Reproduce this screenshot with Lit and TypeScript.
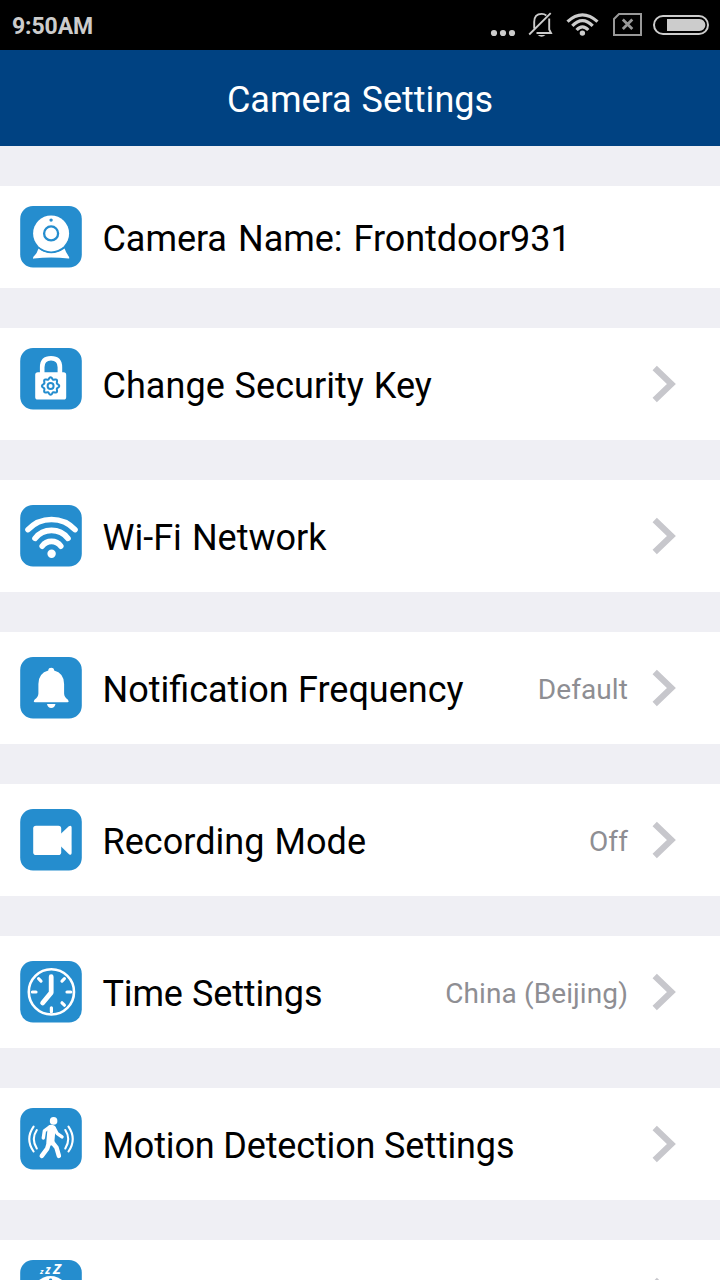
import { LitElement, html, css, svg } from "lit";
import { customElement, property } from "lit/decorators.js";
import { styleMap } from "lit/directives/style-map.js";

const gearPoints = Array.from({ length: 64 }, (_, i) => {
  const a = (i / 64) * Math.PI * 2;
  const r = 7.7 + 0.95 * Math.cos(a * 8);
  return `${(30.6 + r * Math.cos(a)).toFixed(2)},${(38 + r * Math.sin(a)).toFixed(2)}`;
}).join(" ");

const glyphs: Record<string, unknown> = {
  camera: svg`
    <path d="M18.5 42.5 Q17 47.5 13.6 50.6 Q12.2 53 14 52.6 Q31 50.4 48.4 52.6 Q50 52.8 48.8 50.4 Q46 47 44.6 42.5 Q31 52 18.5 42.5Z" fill="#fff"/>
    <circle cx="31.1" cy="27.4" r="19.6" fill="#258dce"/>
    <circle cx="31.1" cy="27.4" r="18" fill="#fff"/>
    <circle cx="31.1" cy="27.4" r="7" fill="none" stroke="#258dce" stroke-width="2.3"/>
    <circle cx="31.1" cy="14.1" r="1.7" fill="#258dce"/>`,
  lock: svg`
    <path d="M22.2 26 V19.3 Q22.2 10.3 31 10.3 Q39.9 10.3 39.9 19.3 V26" fill="none" stroke="#fff" stroke-width="4.6"/>
    <rect x="15.2" y="24.3" width="31" height="27.2" rx="2.6" fill="#fff"/>
    <polygon points=${gearPoints} fill="none" stroke="#258dce" stroke-width="2"/>
    <circle cx="30.6" cy="38" r="3" fill="none" stroke="#258dce" stroke-width="2"/>`,
  wifi: svg`
    <g fill="none" stroke="#fff" stroke-width="5.6" stroke-linecap="round">
      <path d="M8 24.6 A32.3 32.3 0 0 1 55 24.6"/>
      <path d="M15 33.4 A21 21 0 0 1 48 33.4"/>
      <path d="M22.2 41.2 A11.4 11.4 0 0 1 40.8 41.2"/>
    </g><circle cx="31.6" cy="48.8" r="4.2" fill="#fff"/>`,
  bell: svg`
    <path d="M28.3 13.6 V12.8 Q28.5 10.8 31.2 10.8 Q33.9 10.8 34.1 12.8 V13.6 Q44 16.2 44.1 27 V36.5 Q44.2 40 47.7 42.5 Q49.7 45.2 47.5 45.2 H15 Q12.7 45.2 14.7 42.5 Q18.3 40 18.4 36.5 V27 Q18.5 16.2 28.3 13.6Z" fill="#fff"/>
    <path d="M27 47.1 H35.5 Q34.6 51 31.2 51 Q27.9 51 27 47.1Z" fill="#fff"/>`,
  video: svg`
    <rect x="13.2" y="16.8" width="28" height="29.2" rx="2.8" fill="#fff"/>
    <path d="M40 25.6 L48.8 17.3 Q51.6 15.6 51.6 18.6 V44 Q51.6 46.8 49 45.2 L40 36.6Z" fill="#fff"/>`,
  clock: svg`
    <g fill="none" stroke="#fff" stroke-linecap="round">
      <circle cx="31.4" cy="30.9" r="22.6" stroke-width="2.6"/>
      <path d="M31.2 15.7 V31.6 L22.6 42" stroke-width="4.8" stroke-linejoin="round"/>
      <path d="M12.4 31H16M47 31h3.8M18.6 17.7l2.4 2.4M42 20.1l2.4-2.4M42 41.8l2.4 2.4M31.4 46.8v4" stroke-width="3.2"/>
    </g>`,
  motion: svg`
    <circle cx="33.6" cy="12.9" r="3.8" fill="#fff"/>
    <g fill="none" stroke="#fff" stroke-linecap="round" stroke-linejoin="round">
      <path d="M31.5 20.8 L30.4 33.5" stroke-width="8"/>
      <path d="M29.5 19 L24.4 22.8 L23.3 30" stroke-width="3.4"/>
      <path d="M34 19.5 L37 25.3 L42 28.9" stroke-width="3.4"/>
      <path d="M29.2 34 L27.2 40.6 L21.8 47.9" stroke-width="4.5"/>
      <path d="M32 34 L36.5 39.6 L38.9 47.9" stroke-width="4.5"/>
      <path d="M13.6 18.6 Q4.9 31 13.6 43.5" stroke-width="2.1"/>
      <path d="M16.8 22 Q10.8 31 16.8 40.5" stroke-width="2.1"/>
      <path d="M48.5 18.6 Q57 31 48.5 43.5" stroke-width="2.1"/>
      <path d="M45.3 22 Q51.2 31 45.3 40.5" stroke-width="2.1"/>
    </g>`,
  sleep: svg`
    <g fill="#fff" font-family="Open Sans" font-weight="700" font-style="italic">
      <text x="20" y="14" font-size="7.5">z</text>
      <text x="25.3" y="14" font-size="11.5">z</text>
      <text x="33" y="14" font-size="14.8">Z</text>
    </g>
    <circle cx="30.6" cy="34.4" r="18.4" fill="#fff"/>
    <circle cx="30.6" cy="20.3" r="1.7" fill="#258dce"/>`,
};

interface Row {
  icon: string;
  label: string;
  value?: string;
  height: number;
  iconTop: number;
  arrow: boolean;
  tracking?: number;
  wordGap?: number;
}

const rows: Row[] = [
  { icon: "camera", label: "Camera Name: Frontdoor931", height: 102, iconTop: 20, arrow: false, wordGap: 2.3, tracking: -0.06 },
  { icon: "lock", label: "Change Security Key", height: 112, iconTop: 20, arrow: true, wordGap: 0.8, tracking: 0.05 },
  { icon: "wifi", label: "Wi-Fi Network", height: 112, iconTop: 25, arrow: true, wordGap: 1.2 },
  { icon: "bell", label: "Notification Frequency", value: "Default", height: 112, iconTop: 25, arrow: true, wordGap: 0.5 },
  { icon: "video", label: "Recording Mode", value: "Off", height: 112, iconTop: 25, arrow: true, wordGap: 1, tracking: 0.04 },
  { icon: "clock", label: "Time Settings", value: "China (Beijing)", height: 112, iconTop: 25, arrow: true, wordGap: 0.5, tracking: -0.15 },
  { icon: "motion", label: "Motion Detection Settings", height: 112, iconTop: 20, arrow: true, tracking: -0.15 },
  { icon: "sleep", label: "", height: 112, iconTop: 20, arrow: true },
];

@customElement("settings-row")
export class SettingsRow extends LitElement {
  @property({ attribute: false }) row!: Row;

  static styles = css`
    :host { display: block; flex: none; }
    .row { display: flex; box-sizing: border-box; background: #fff; padding: 0 44px 0 20px; }
    .icon { flex: none; display: block; width: 62px; height: 62px; }
    .label { flex: 1; align-self: center; padding: 3px 0 0 20.5px; font-size: 36px; line-height: 42px; color: #000; white-space: nowrap; font-variant-ligatures: common-ligatures; }
    .value { align-self: center; padding-top: 4px; margin-right: 24px; font-size: 28px; line-height: 34px; letter-spacing: 0.1px; color: #8e8e93; white-space: nowrap; }
    .arrow { flex: none; align-self: center; display: block; width: 24px; height: 38px; }
  `;

  render() {
    const r = this.row;
    const spacing = {
      letterSpacing: r.tracking ? `${r.tracking}px` : "normal",
      wordSpacing: `${r.wordGap ?? 0}px`,
    };
    return html`<div class="row" style=${styleMap({ height: `${r.height}px` })}>
      <svg class="icon" viewBox="0 0 62 62" style=${styleMap({ marginTop: `${r.iconTop}px` })}>
        <rect x="0.2" y="0.1" width="61.6" height="61.5" rx="12.8" fill="#258dce" />
        ${glyphs[r.icon]}
      </svg>
      <div class="label" style=${styleMap(spacing)}>${r.label}</div>
      ${r.value ? html`<div class="value">${r.value}</div>` : ""}
      ${r.arrow
        ? html`<svg class="arrow" viewBox="0 0 24 38">
            <path d="M2.7 3 L19.4 19 L2.7 35" fill="none" stroke="#c7c7cc" stroke-width="6.2" />
          </svg>`
        : ""}
    </div>`;
  }
}

@customElement("app-root")
export class AppRoot extends LitElement {
  static styles = css`
    :host { display: flex; flex-direction: column; width: 720px; height: 1280px; overflow: hidden; background: #efeff4; font-family: Roboto, sans-serif; }
    .status { flex: none; display: flex; justify-content: space-between; height: 50px; background: #000; color: #ccc; }
    .time { padding: 13px 0 0 12px; font-size: 23px; line-height: 28px; font-weight: 700; letter-spacing: -0.1px; }
    .tray { display: block; width: 240px; height: 50px; }
    .title { flex: none; display: flex; align-items: center; justify-content: center; height: 96px; box-sizing: border-box; padding-top: 3px; background: #004282; color: #fff; font-size: 36px; word-spacing: 1px; }
    .list { flex: none; display: flex; flex-direction: column; gap: 40px; padding-top: 40px; }
  `;

  render() {
    return html`
      <div class="status">
        <div class="time">9:50AM</div>
        <svg class="tray" viewBox="0 0 240 50">
          <g fill="#ccc"><circle cx="14" cy="33" r="3.1" /><circle cx="23" cy="33" r="3.1" /><circle cx="32" cy="33" r="3.1" /></g>
          <g fill="none" stroke="#ccc" stroke-width="1.9">
            <path d="M54.2 28.5 V22 Q54.2 14 61.7 13.9 Q64.5 13.9 66.3 15.4M69.2 18.5 V29.5 L71 33 H56.5M49.2 34.5 L70.7 13.2" />
          </g>
          <path d="M57.7 35 H65.5 Q61.6 38.5 57.7 35Z" fill="#ccc" />
          <g fill="none" stroke="#ccc" stroke-width="3.2">
            <path d="M87.5 21.6 Q102.4 8 117.5 21.6" />
            <path d="M92.3 25.9 Q102.4 15.3 112.7 25.9" />
            <path d="M96.6 30 Q102.4 23.6 108.3 30" />
          </g>
          <circle cx="102.4" cy="33.1" r="2.7" fill="#ccc" />
          <g fill="none" stroke="#999">
            <path d="M139 14 H161 V35 H134 V19Z" stroke-width="2" />
            <path d="M142.8 19.6 L152.3 28.9M152.3 19.6 L142.8 28.9" stroke-width="2.8" />
          </g>
          <rect x="174" y="16" width="54" height="18" rx="9" fill="none" stroke="#ccc" stroke-width="2" />
          <path d="M187 19 H219.4 A6 6 0 0 1 219.4 31 H187Z" fill="#ccc" />
        </svg>
      </div>
      <div class="title">Camera Settings</div>
      <div class="list">${rows.map((row) => html`<settings-row .row=${row}></settings-row>`)}</div>
    `;
  }
}
